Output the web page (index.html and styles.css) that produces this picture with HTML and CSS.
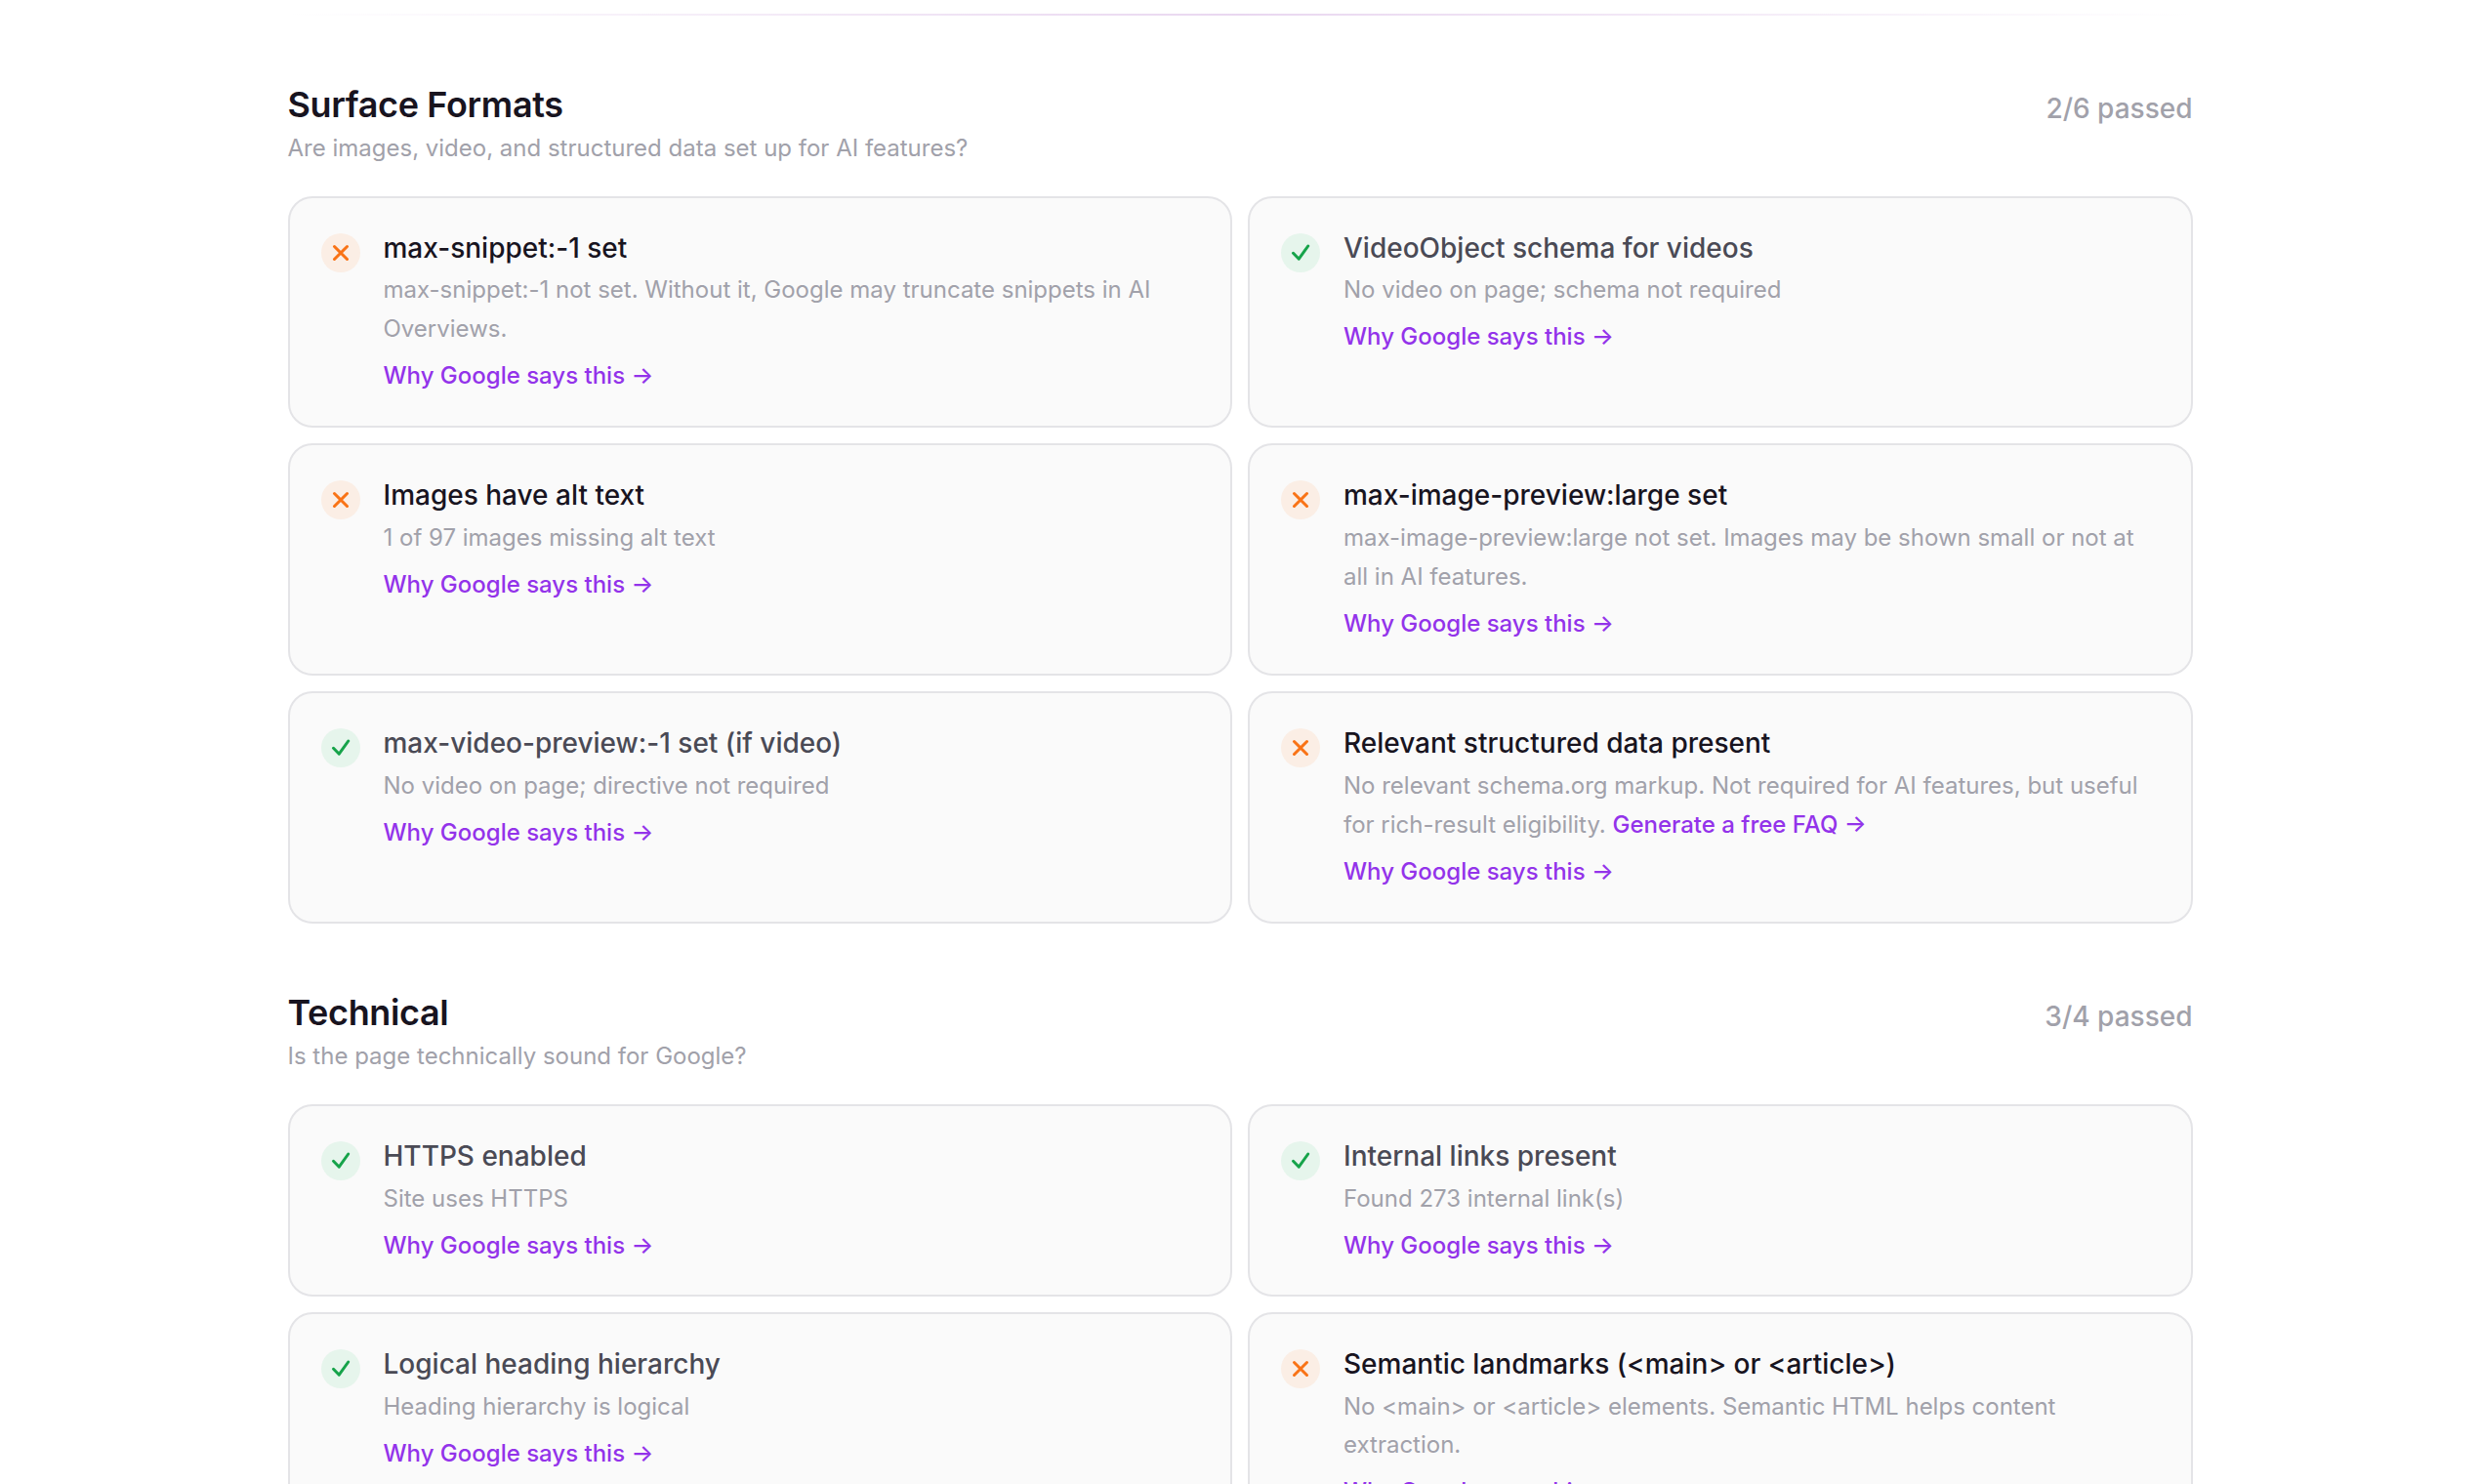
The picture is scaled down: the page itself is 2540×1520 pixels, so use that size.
FILE: index.html
```html
<!DOCTYPE html>
<html lang="en">
<head>
<meta charset="utf-8">
<title>Audit</title>
<link rel="stylesheet" href="styles.css">
</head>
<body>
<main class="page">
  <div class="divider"></div>
  <section class="section">
    <header class="head">
      <div>
        <h2>Surface Formats</h2>
        <p class="sub">Are images, video, and structured data set up for AI features?</p>
      </div>
      <span class="count">2/6 passed</span>
    </header>
    <div class="grid tall">
      <article class="card fail">
        <span class="ico"><svg viewBox="0 0 24 24"><path d="M5.5 5.5l13 13M18.5 5.5l-13 13"/></svg></span>
        <div class="body"><h3>max-snippet:-1 set</h3><p>max-snippet:-1 not set. Without it, Google may truncate snippets in AI Overviews.</p><a href="#">Why Google says this →</a></div>
      </article>
      <article class="card pass">
        <span class="ico"><svg viewBox="0 0 24 24"><path d="M4.5 12.3l5.8 5.9L19.7 5"/></svg></span>
        <div class="body"><h3>VideoObject schema for videos</h3><p>No video on page; schema not required</p><a href="#">Why Google says this →</a></div>
      </article>
      <article class="card fail">
        <span class="ico"><svg viewBox="0 0 24 24"><path d="M5.5 5.5l13 13M18.5 5.5l-13 13"/></svg></span>
        <div class="body"><h3>Images have alt text</h3><p>1 of 97 images missing alt text</p><a href="#">Why Google says this →</a></div>
      </article>
      <article class="card fail">
        <span class="ico"><svg viewBox="0 0 24 24"><path d="M5.5 5.5l13 13M18.5 5.5l-13 13"/></svg></span>
        <div class="body"><h3>max-image-preview:large set</h3><p>max-image-preview:large not set. Images may be shown small or not at all in AI features.</p><a href="#">Why Google says this →</a></div>
      </article>
      <article class="card pass">
        <span class="ico"><svg viewBox="0 0 24 24"><path d="M4.5 12.3l5.8 5.9L19.7 5"/></svg></span>
        <div class="body"><h3>max-video-preview:-1 set (if video)</h3><p>No video on page; directive not required</p><a href="#">Why Google says this →</a></div>
      </article>
      <article class="card fail">
        <span class="ico"><svg viewBox="0 0 24 24"><path d="M5.5 5.5l13 13M18.5 5.5l-13 13"/></svg></span>
        <div class="body"><h3>Relevant structured data present</h3><p>No relevant schema.org markup. Not required for AI features, but useful for rich-result eligibility. <a class="inline" href="#">Generate a free FAQ →</a></p><a href="#">Why Google says this →</a></div>
      </article>
    </div>
  </section>
  <section class="section">
    <header class="head">
      <div>
        <h2>Technical</h2>
        <p class="sub">Is the page technically sound for Google?</p>
      </div>
      <span class="count">3/4 passed</span>
    </header>
    <div class="grid">
      <article class="card pass">
        <span class="ico"><svg viewBox="0 0 24 24"><path d="M4.5 12.3l5.8 5.9L19.7 5"/></svg></span>
        <div class="body"><h3>HTTPS enabled</h3><p>Site uses HTTPS</p><a href="#">Why Google says this →</a></div>
      </article>
      <article class="card pass">
        <span class="ico"><svg viewBox="0 0 24 24"><path d="M4.5 12.3l5.8 5.9L19.7 5"/></svg></span>
        <div class="body"><h3>Internal links present</h3><p>Found 273 internal link(s)</p><a href="#">Why Google says this →</a></div>
      </article>
      <article class="card pass">
        <span class="ico"><svg viewBox="0 0 24 24"><path d="M4.5 12.3l5.8 5.9L19.7 5"/></svg></span>
        <div class="body"><h3>Logical heading hierarchy</h3><p>Heading hierarchy is logical</p><a href="#">Why Google says this →</a></div>
      </article>
      <article class="card fail">
        <span class="ico"><svg viewBox="0 0 24 24"><path d="M5.5 5.5l13 13M18.5 5.5l-13 13"/></svg></span>
        <div class="body"><h3>Semantic landmarks (&lt;main&gt; or &lt;article&gt;)</h3><p>No &lt;main&gt; or &lt;article&gt; elements. Semantic HTML helps content extraction.</p><a href="#">Why Google says this →</a></div>
      </article>
    </div>
  </section>
</main>
</body>
</html>
```
FILE: styles.css
```css
html, body { margin: 0; padding: 0; background: #fff; height: 1520px; overflow: hidden; }
body { font-family: Inter, "Liberation Sans", sans-serif; }
.page { width: 1951px; margin: 0 auto; padding-top: 14px; display: flex; flex-direction: column; gap: 67.5px; }
.divider { height: 2px; background: linear-gradient(90deg, transparent, #e9d7f0 50%, transparent); }
.head { display: flex; justify-content: space-between; align-items: flex-start; margin-bottom: 30px; }
h2 { margin: 0; font-size: 36px; line-height: 47px; font-weight: 600; letter-spacing: -0.01em; color: #18141f; }
.sub { margin: 1px 0 0; font-size: 24px; line-height: 39px; color: #a1a1aa; }
.count { font-size: 28px; line-height: 38px; margin-top: 8px; font-weight: 500; color: #a1a1aa; }
.grid { display: grid; grid-template-columns: 1fr 1fr; gap: 16px; }
.tall .card { min-height: 237.9px; }
.card { display: flex; gap: 24px; padding: 32px; background: #fafafa; border: 2px solid #e4e4e7; border-radius: 25px; box-sizing: border-box; }
.ico { flex: none; width: 40px; height: 40px; border-radius: 50%; margin-top: 4px; display: flex; align-items: center; justify-content: center; }
.ico svg { width: 24px; height: 24px; fill: none; stroke-width: 3; stroke-linecap: round; stroke-linejoin: round; }
.fail .ico { background: #fbeee5; }
.fail .ico svg { stroke: #f97316; }
.pass .ico { background: #e6f5ec; }
.pass .ico svg { stroke: #16a34a; }
h3 { margin: 0; font-size: 28px; line-height: 39px; font-weight: 500; color: #18141f; }
.pass h3 { color: #4a4a55; }
.card p { margin: 3.9px 0 9.5px; font-size: 24px; line-height: 39.6px; color: #a1a1aa; }
.card a { font-size: 24px; line-height: 37px; font-weight: 500; color: #9333ea; text-decoration: none; display: block; }
.card a.inline { display: inline; }
```
